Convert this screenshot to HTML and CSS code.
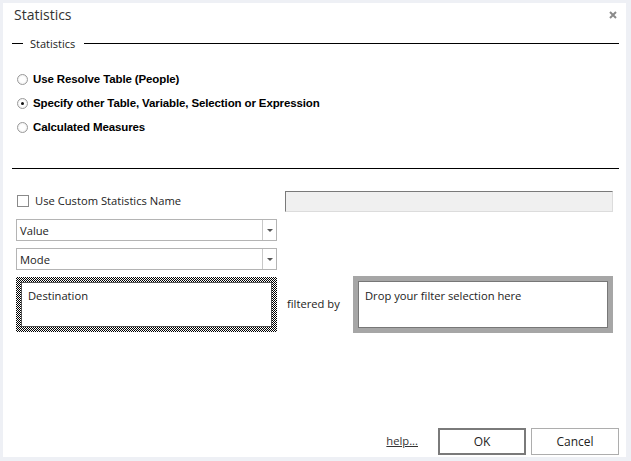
FILE: index.html
```html
<!DOCTYPE html>
<html lang="en">
<head>
  <meta charset="UTF-8">
  <title>Statistics</title>
  <link rel="stylesheet" href="styles.css">
</head>
<body>
  <div class="dialog">
    <div class="titlebar">
      <span class="title">Statistics</span>
      <svg class="close" width="8" height="8" viewBox="0 0 8 8">
        <path d="M1 1L7 7M7 1L1 7" stroke="#8a8a8a" stroke-width="2"/>
      </svg>
    </div>

    <div class="group-head">
      <span class="dash"></span>
      <span class="group-label">Statistics</span>
      <span class="rule"></span>
    </div>

    <ul class="choices">
      <li class="choice"><span class="radio"></span>Use Resolve Table (People)</li>
      <li class="choice"><span class="radio on"></span>Specify other Table, Variable, Selection or Expression</li>
      <li class="choice"><span class="radio"></span>Calculated Measures</li>
    </ul>

    <div class="sep"></div>

    <div class="name-row">
      <label class="check-label"><span class="check"></span>Use Custom Statistics Name</label>
      <div class="name-input"></div>
    </div>

    <div class="combo"><span class="combo-text">Value</span><span class="combo-btn"></span></div>
    <div class="combo"><span class="combo-text">Mode</span><span class="combo-btn"></span></div>

    <div class="drop-row">
      <div class="drop hatched"><div class="drop-in">Destination</div></div>
      <span class="filtered">filtered by</span>
      <div class="drop grey"><div class="drop-in">Drop your filter selection here</div></div>
    </div>

    <div class="footer">
      <a class="help" href="#">help...</a>
      <button class="btn default">OK</button>
      <button class="btn">Cancel</button>
    </div>
  </div>
</body>
</html>
```

FILE: styles.css
```css
* {margin:0; padding:0; box-sizing:border-box;}
html, body {height:100%;}
body{
  background:#eef0f5;
  font-family:"Open Sans", "Noto Sans", sans-serif;
  font-size:11.2px;
  color:#222;
  padding:3px 5px 4px 3px;
}
.dialog{
  height:100%;
  background:#fff;
  display:flex;
  flex-direction:column;
  padding:0 7px 2px 13px;
}

/* title bar */
.titlebar{
  height:22px;
  display:flex;
  align-items:center;
  justify-content:space-between;
  margin-left:-2px;
}
.title{font-size:14px; color:#333;}
.close{margin-top:1px; margin-right:2px;}

/* group header */
.group-head{
  margin-top:11px;
  height:14px;
  display:flex;
  align-items:center;
  margin-left:-4px;
}
.dash{width:11px; border-top:1px solid #000;}
.group-label{margin:0 9px 0 7px; font-size:11px; color:#222;}
.rule{flex:1; border-top:1px solid #000;}

/* radio list */
.choices{list-style:none; margin-top:17px;}
.choice{
  height:24px;
  display:flex;
  align-items:center;
  font-family:"Liberation Sans", Arial, sans-serif;
  font-weight:bold;
  font-size:11.5px;
  letter-spacing:-0.12px;
  color:#000;
}
.radio{
  width:11px; height:11px;
  border:1px solid #9a9a9a;
  border-radius:50%;
  background:radial-gradient(circle, #fff 40%, #e4e4e4 100%);
  margin:0 5px 0 1px;
  position:relative;
}
.radio.on::after{
  content:"";
  position:absolute;
  left:3px; top:3px;
  width:3px; height:3px;
  border-radius:50%;
  background:#111;
}

.sep{margin-top:29px; border-top:1px solid #000; margin-left:-4px;}

/* custom name */
.name-row{
  margin-top:22px;
  height:21px;
  display:flex;
  align-items:center;
  justify-content:space-between;
}
.check-label{display:flex; align-items:center; color:#222; margin-top:-2px;}
.check{
  width:12px; height:12px;
  border:1px solid #8a8a8a;
  background:#fff;
  margin:0 6px 0 1px;
}
.name-input{
  width:328px; height:21px;
  margin-right:6px;
  background:#f0f0f0;
  border:1px solid #dcdcdc;
  border-top-color:#7a7a7a;
  border-left-color:#7a7a7a;
}

/* combos */
.combo{
  width:261px; height:22px;
  border:1px solid #b4b4b4;
  display:flex;
  align-items:center;
  margin-top:7px;
}
.combo + .combo{margin-top:7px;}
.combo-text{flex:1; padding-left:3px;}
.combo-btn{
  width:14px; height:100%;
  border-left:1px solid #c8c8c8;
  position:relative;
}
.combo-btn::after{
  content:"";
  position:absolute;
  left:4px; top:9px;
  border-left:3px solid transparent;
  border-right:3px solid transparent;
  border-top:3px solid #555;
}

/* drop targets */
.drop-row{
  margin-top:6px;
  display:flex;
  align-items:flex-start;
}
.drop{padding:5px;}
.drop-in{
  height:100%;
  background:#fff;
  border:1px solid #555;
  padding:5px 0 0 6px;
}
.hatched{
  width:261px; height:55px;
  margin-top:1px;
  background:repeating-conic-gradient(#000 0 25%, #fff 0 50%) 0 0/2px 2px;
}
.grey{
  width:260px; height:57px;
  background:#a6a6a6;
}
.grey .drop-in{border-color:#777; padding-top:6px;}
.filtered{width:76px; padding-left:10px; margin-top:20px;}

/* footer */
.footer{
  margin-top:auto;
  display:flex;
  align-items:center;
  justify-content:flex-end;
}
.help{color:#333; margin-right:20px; margin-top:-3px;}
.btn{
  width:88px; height:27px;
  background:#fff;
  border:1px solid #adadad;
  font-family:inherit;
  font-size:12px;
  color:#222;
  margin-left:5px;
}
.btn.default{border:2px solid #7a7a7a; margin-left:0;}
```
